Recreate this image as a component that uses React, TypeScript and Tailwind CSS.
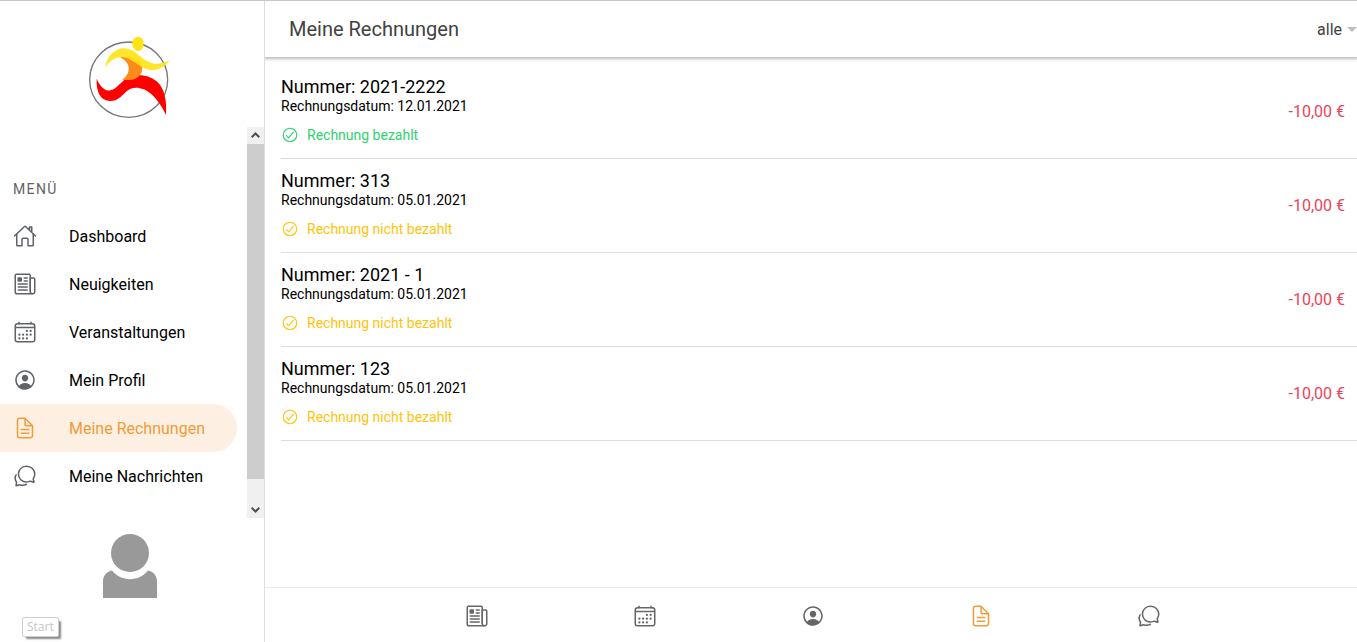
import { useState } from "react";
import type { IconType } from "react-icons";
import {
  IoCalendarOutline,
  IoChatbubblesOutline,
  IoCheckmarkCircleOutline,
  IoDocumentTextOutline,
  IoHomeOutline,
  IoNewspaperOutline,
  IoPersonCircleOutline,
} from "react-icons/io5";

interface NavItem {
  label: string;
  icon: IconType;
  active?: boolean;
}

interface Invoice {
  number: string;
  date: string;
  paid: boolean;
  amount: string;
}

const navItems: NavItem[] = [
  { label: "Dashboard", icon: IoHomeOutline },
  { label: "Neuigkeiten", icon: IoNewspaperOutline },
  { label: "Veranstaltungen", icon: IoCalendarOutline },
  { label: "Mein Profil", icon: IoPersonCircleOutline },
  { label: "Meine Rechnungen", icon: IoDocumentTextOutline, active: true },
  { label: "Meine Nachrichten", icon: IoChatbubblesOutline },
];

// The tab bar repeats the menu without the dashboard.
const tabItems = navItems.slice(1);

const invoices: Invoice[] = [
  { number: "2021-2222", date: "12.01.2021", paid: true, amount: "-10,00 €" },
  { number: "313", date: "05.01.2021", paid: false, amount: "-10,00 €" },
  { number: "2021 - 1", date: "05.01.2021", paid: false, amount: "-10,00 €" },
  { number: "123", date: "05.01.2021", paid: false, amount: "-10,00 €" },
];

const Logo = () => (
  <svg viewBox="51 45 258 252" className="h-[84px] w-[86px]" aria-hidden="true">
    <ellipse cx="176" cy="179" rx="117" ry="113" fill="none" stroke="#777" strokeWidth="4" />
    <path
      d="M80 176C92 204 108 214 122 211C142 206 152 182 180 170C204 160 236 166 260 184C284 204 291 244 288 285C272 250 250 222 222 208C200 199 184 203 172 212C154 227 144 244 118 243C90 240 78 214 80 176Z"
      fill="#ff0000"
    />
    <path
      d="M150 112C178 106 208 112 215 134C220 154 212 168 196 176C184 181 168 181 156 179C172 170 177 156 176 142C174 128 164 120 150 112Z"
      fill="#ff8c1a"
    />
    <path
      d="M105 144C110 108 134 84 164 85C200 87 214 122 246 130C264 134 282 130 300 120C284 142 262 152 240 150C208 146 194 118 160 112C136 109 118 122 105 144Z"
      fill="#ffe41a"
      fillOpacity="0.93"
    />
    <path
      d="M187 66C190 54 200 49 208 51C219 54 223 66 220 78C217 89 209 95 203 93C193 90 184 78 187 66Z"
      fill="#ffe414"
    />
  </svg>
);

const Avatar = () => (
  <svg viewBox="0 0 54 64" className="h-16 w-[54px]" fill="#999" aria-hidden="true">
    <circle cx="27" cy="19" r="19" />
    <path d="M0 64V47C0 42 4 37 9 36.5C18 48 36 48 45 36.5C50 37 54 42 54 47V64Z" />
  </svg>
);

const ScrollArrow = ({ down }: { down?: boolean }) => (
  <span className="flex h-[17px] items-center justify-center">
    <svg viewBox="0 0 9 7" className="h-[7px] w-[9px]" fill="none" stroke="#505050" strokeWidth="2">
      <path d={down ? "M0.7 1.7L4.5 5.500L8.3 1.7" : "M0.7 5.3L4.5 1.5L8.3 5.3"} />
    </svg>
  </span>
);

const Scrollbar = () => (
  <div aria-hidden="true" className="flex w-[17px] shrink-0 flex-col bg-[#f0f0f0]">
    <ScrollArrow />
    <div className="grow bg-[#cdcdcd]" />
    <div className="h-[22px]" />
    <ScrollArrow down />
  </div>
);

const Sidebar = () => (
  <aside className="relative z-10 flex w-[265px] shrink-0 flex-col border-r border-[#dedede] bg-white">
    <div className="flex h-[126px] shrink-0 justify-center pt-[34px] pr-1">
      <Logo />
    </div>

    <div className="flex min-h-0 grow">
      <nav className="min-w-0 grow overflow-hidden pt-[52px]">
        <h2 className="px-[13px] text-sm tracking-widest text-[#5f6368]">MENÜ</h2>
        <ul className="mt-[13px] pr-[10px]">
          {navItems.map(({ label, icon: Icon, active }) => (
            <li key={label}>
              <a
                href="#"
                aria-current={active ? "page" : undefined}
                className={
                  active
                    ? "flex h-12 items-center gap-8 rounded-r-full bg-[#fdf0e3] pl-[13px] text-[#f29b38]"
                    : "flex h-12 items-center gap-8 rounded-r-full pl-[13px] text-black"
                }
              >
                <Icon size={24} className={active ? "shrink-0" : "shrink-0 text-[#5f6368]"} />
                <span className="pt-0.5">{label}</span>
              </a>
            </li>
          ))}
        </ul>
      </nav>
      <Scrollbar />
    </div>

    <div className="flex h-[124px] shrink-0 justify-center pt-4 pr-1">
      <Avatar />
    </div>

    <span
      role="tooltip"
      className="absolute bottom-[5px] left-[22px] rounded-xs border border-[#cfcfcf] bg-white px-1 font-['Open_Sans',sans-serif] text-xs leading-[18px] text-[#c4c4c4] shadow-[3px_3px_2px_-1px_#888]"
    >
      Start
    </span>
  </aside>
);

const InvoiceRow = ({ invoice }: { invoice: Invoice }) => (
  <li className="flex items-center justify-between border-b border-[#dedede] pr-3">
    <div className="pt-3 pb-[13px]">
      <h2 className="text-lg leading-5 text-black">Nummer: {invoice.number}</h2>
      <p className="text-sm leading-[18px] text-black">Rechnungsdatum: {invoice.date}</p>
      <p
        className={
          invoice.paid
            ? "mt-[10px] flex items-center gap-2 text-sm leading-5 text-[#2dd36f]"
            : "mt-[10px] flex items-center gap-2 text-sm leading-5 text-[#ffc409]"
        }
      >
        <IoCheckmarkCircleOutline size={18} />
        <span>{invoice.paid ? "Rechnung bezahlt" : "Rechnung nicht bezahlt"}</span>
      </p>
    </div>
    <span className="text-[#eb445a]">{invoice.amount}</span>
  </li>
);

const App = () => {
  const [filter, setFilter] = useState("alle");

  const visible = invoices.filter(
    (i) => filter === "alle" || (filter === "bezahlt" ? i.paid : !i.paid),
  );

  return (
    <div className="flex h-screen overflow-hidden border-t border-[#c8c8c8] bg-white font-[Roboto,sans-serif]">
      <Sidebar />

      <div className="flex min-w-0 grow flex-col">
        <header className="flex h-14 shrink-0 items-center justify-between pl-6 shadow-[0_1px_3px_1px_#bbb]">
          <h1 className="text-xl text-[#424242]">Meine Rechnungen</h1>
          <div className="flex items-center gap-[5px]">
            <select
              aria-label="Rechnungen filtern"
              value={filter}
              onChange={(e) => setFilter(e.target.value)}
              className="field-sizing-content appearance-none bg-transparent pt-0.5 text-[#424242]"
            >
              <option value="alle">alle</option>
              <option value="bezahlt">bezahlt</option>
              <option value="offen">nicht bezahlt</option>
            </select>
            <svg viewBox="0 0 10 5" className="h-[5px] w-[10px]" fill="#bdbdbd" aria-hidden="true">
              <path d="M0 0H10L5 5Z" />
            </svg>
          </div>
        </header>

        <main className="min-h-0 grow overflow-hidden pt-2 pl-4">
          <ul>
            {visible.map((invoice) => (
              <InvoiceRow key={invoice.number} invoice={invoice} />
            ))}
          </ul>
        </main>

        <nav
          aria-label="Schnellzugriff"
          className="flex h-[55px] shrink-0 justify-center border-t border-[#e8e8e8] pt-0.5 pl-1"
        >
          {tabItems.map(({ label, icon: Icon, active }) => (
            <a
              key={label}
              href="#"
              aria-label={label}
              className={
                active
                  ? "flex max-w-[168px] grow items-center justify-center text-[#f29b38]"
                  : "flex max-w-[168px] grow items-center justify-center text-[#666]"
              }
            >
              <Icon size={24} />
            </a>
          ))}
        </nav>
      </div>
    </div>
  );
};

export default App;
